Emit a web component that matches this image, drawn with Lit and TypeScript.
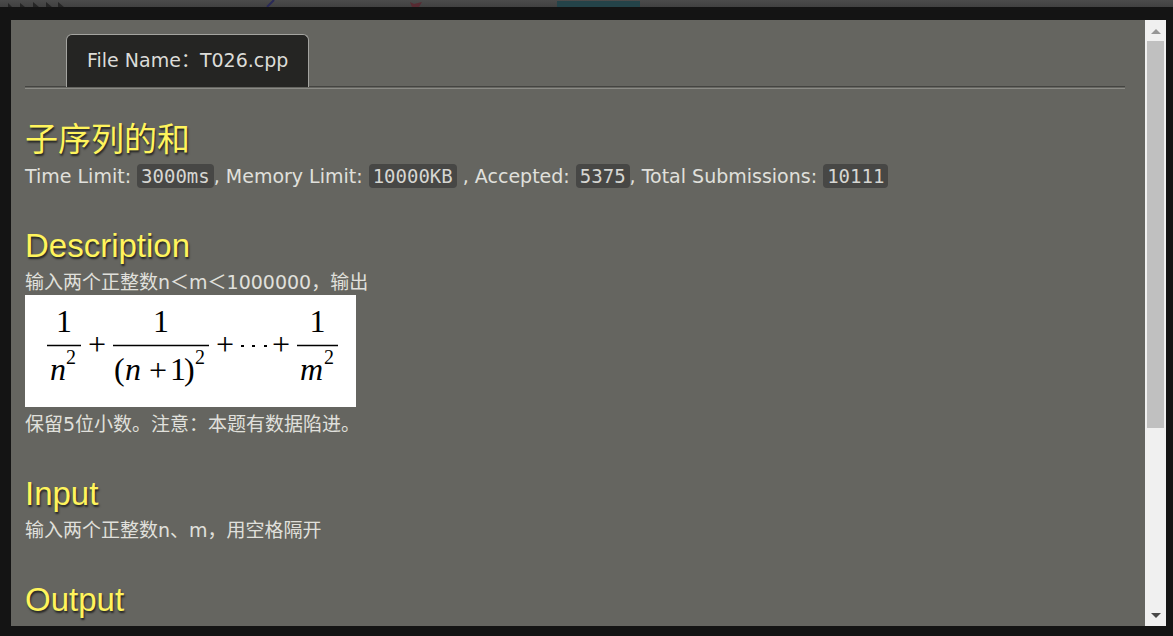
import { LitElement, html, css, svg } from "lit";
import { customElement } from "lit/decorators.js";

@customElement("sum-formula")
class SumFormula extends LitElement {
  static styles = css`
    :host { display: block; margin-bottom: 4px; }
    .figure { display: block; background: #fff; }
    .figure text { font-family: "Liberation Serif", serif; fill: #000; font-size: 32px; }
    .figure .var { font-style: italic; }
    .figure .sup { font-size: 20px; }
    .figure .mid { text-anchor: middle; }
    .figure line { stroke: #000; stroke-width: 1.6; }
  `;

  private bar(from: number, to: number) {
    return svg`<line x1=${from} x2=${to} y1="50.5" y2="50.5"></line>
      <text class="mid" x=${(from + to) / 2} y="37">1</text>`;
  }

  render() {
    return html`
      <svg class="figure" width="331" height="112" viewBox="0 0 331 112" role="img"
        aria-label="1/n² + 1/(n+1)² + ⋯ + 1/m²">
        ${this.bar(22, 56)}
        <text class="var" x="25" y="85">n</text><text class="sup" x="41" y="69">2</text>
        <text class="mid" x="72" y="60">+</text>
        ${this.bar(88, 184)}
        <text x="89" y="85">(</text><text class="var" x="100" y="85">n</text>
        <text class="mid" x="133" y="86">+</text><text class="mid" x="153" y="85">1</text>
        <text x="159" y="85">)</text><text class="sup" x="170" y="69">2</text>
        <text class="mid" x="200" y="60">+</text>
        <g fill="#000"><rect x="216" y="50" width="3" height="2"></rect><rect x="227" y="50" width="3" height="2"></rect><rect x="239" y="50" width="3" height="2"></rect></g>
        <text class="mid" x="256" y="60">+</text>
        ${this.bar(272, 313)}
        <text class="var" x="275" y="85">m</text><text class="sup" x="299" y="69">2</text>
      </svg>`;
  }
}

@customElement("app-root")
class AppRoot extends LitElement {
  static styles = css`
    :host {
      display: block;
      color: #e0e0dc;
      font: 19px/26px "DejaVu Sans", "Noto Sans CJK SC", sans-serif;
    }
    .page { display: flex; flex-direction: column; height: 100vh; background: #141414; }
    .backdrop { flex: none; height: 7px; background: linear-gradient(#4b4b4b, #414141); }
    .backdrop svg { display: block; }
    .frame { flex: 1; min-height: 0; display: flex; padding: 13px 7px 10px 11px; }
    .panel {
      flex: 1; min-width: 0; overflow: auto; scrollbar-width: none;
      box-sizing: border-box; padding: 14px 20px 14px 14px; background: #656560;
    }
    .tabs {
      display: flex; padding-left: 41px; margin-bottom: 28px;
      border-bottom: 1px solid #8b8b86;
      background: linear-gradient(#444441, #444441) 0 52px / 100% 1px no-repeat;
    }
    .tab {
      padding: 12px 20px 14px; margin-bottom: 1px; font: inherit; color: #dcdcd8; background: #252523;
      border: 1px solid #a4a4a0; border-bottom: 0; border-radius: 6px 6px 0 0;
    }
    section { margin-bottom: 34px; }
    h2 {
      margin: 0; font: 400 33px/46px "Liberation Sans", "Noto Sans CJK SC", sans-serif;
      color: #fff45c; text-shadow: 1px 2px 2px rgba(0, 0, 0, 0.65);
    }
    p { margin: 0; }
    code {
      padding: 1px 4px; border-radius: 4px; background: #474745; color: #d6d6d2;
      font: 19px/22px "DejaVu Sans Mono", monospace;
    }
    .scroll { flex: none; display: flex; flex-direction: column; width: 21px; background: #f0f0f0; }
    .arrow {
      flex: none; display: flex; align-items: center; justify-content: center;
      height: 21px; padding: 0; border: 0; background: none;
    }
    .track { flex: 1; padding: 0 2px; }
    .thumb { height: 68.6%; background: #c0c0c0; }
  `;

  render() {
    return html`
      <div class="page" lang="zh-CN">
        <div class="backdrop" aria-hidden="true">
          <svg width="660" height="7" viewBox="0 0 660 7">
            <path d="M8 7V3l4 4zM20 7V3l5 4zM33 7V2l6 5zM46 7V2l6 5zM58 7V2l6 5z" fill="#252525"></path>
            <path d="M267 7l7-7" stroke="#292957" stroke-width="2"></path>
            <path d="M410 2l4 2 8-2-3 5h-7z" fill="#572a32"></path>
            <rect x="557" y="1" width="83" height="6" fill="#244349"></rect>
          </svg>
        </div>
        <div class="frame">
          <main class="panel">
            <div class="tabs"><button class="tab">File Name：T026.cpp</button></div>
            <section>
              <h2>子序列的和</h2>
              <p>Time Limit: <code>3000ms</code>, Memory Limit: <code>10000KB</code> , Accepted: <code>5375</code>, Total Submissions: <code>10111</code></p>
            </section>
            <section>
              <h2>Description</h2>
              <p>输入两个正整数n＜m＜1000000，输出</p>
              <sum-formula></sum-formula>
              <p>保留5位小数。注意：本题有数据陷进。</p>
            </section>
            <section>
              <h2>Input</h2>
              <p>输入两个正整数n、m，用空格隔开</p>
            </section>
            <section>
              <h2>Output</h2>
            </section>
          </main>
          <div class="scroll">
            <button class="arrow" aria-label="Scroll up"><svg width="10" height="6" viewBox="0 0 10 6"><path d="M0 6l5-5 5 5z" fill="#969696"></path></svg></button>
            <div class="track"><div class="thumb"></div></div>
            <button class="arrow" aria-label="Scroll down"><svg width="10" height="6" viewBox="0 0 10 6"><path d="M0 0h10l-5 5z" fill="#484848"></path></svg></button>
          </div>
        </div>
      </div>`;
  }
}
